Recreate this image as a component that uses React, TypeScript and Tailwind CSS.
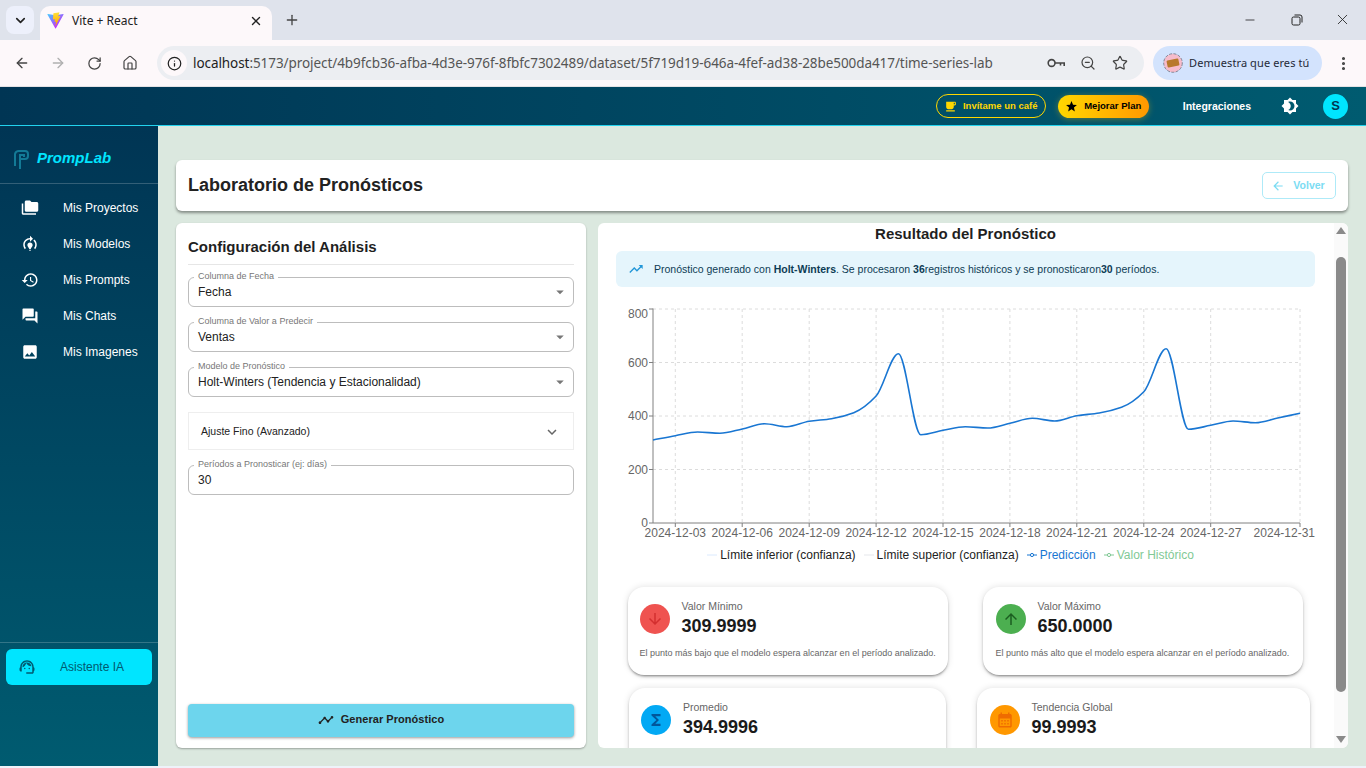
import React from 'react';
import { ArrowLeft, ArrowRight, ChevronDown, Home, Info, Minus, MoreVertical, Plus, RotateCw, Star, X, ZoomOut } from 'lucide-react';

// material style icons, filled
const Mi = ({ d, className }: { d: string; className?: string }) => (
  <svg viewBox="0 0 24 24" fill="currentColor" className={className}>
    <path d={d} />
  </svg>
);

const ICONS = {
  folder: 'M3 19h17v2H3c-1.1 0-2-.9-2-2V6h2v13zM23 6v9c0 1.1-.9 2-2 2H7c-1.1 0-2-.9-2-2l.01-11c0-1.1.89-2 1.99-2h5l2 2h7c1.1 0 2 .9 2 2z',
  model: 'M15.5 13.5c0 2-2.5 3.5-2.5 5h-2c0-1.5-2.5-3-2.5-5 0-1.93 1.57-3.5 3.5-3.5s3.5 1.57 3.5 3.5zm-2.5 6h-2V21h2v-1.5zM19 13c0 1.68-.59 3.21-1.58 4.42l1.42 1.42C20.18 17.27 21 15.23 21 13c0-2.74-1.23-5.19-3.16-6.84l-1.42 1.42C17.99 8.86 19 10.81 19 13zM16 5l-4-4v3c-4.97 0-9 4.03-9 9 0 2.23.82 4.27 2.16 5.84l1.42-1.42C5.59 16.21 5 14.68 5 13c0-3.86 3.14-7 7-7v3l4-4z',
  history: 'M13 3c-4.97 0-9 4.03-9 9H1l3.89 3.89.07.14L9 12H6c0-3.87 3.13-7 7-7s7 3.13 7 7-3.13 7-7 7c-1.93 0-3.68-.79-4.94-2.06l-1.42 1.42C8.27 19.99 10.51 21 13 21c4.97 0 9-4.03 9-9s-4.03-9-9-9zm-1 5v5l4.28 2.54.72-1.21-3.5-2.08V8H12z',
  forum: 'M21 6h-2v9H6v2c0 .55.45 1 1 1h11l4 4V7c0-.55-.45-1-1-1zm-4 6V3c0-.55-.45-1-1-1H3c-.55 0-1 .45-1 1v14l4-4h10c.55 0 1-.45 1-1z',
  image: 'M21 19V5c0-1.1-.9-2-2-2H5c-1.1 0-2 .9-2 2v14c0 1.1.9 2 2 2h14c1.1 0 2-.9 2-2zM8.5 13.5l2.5 3.01L14.5 12l4.5 6H5l3.5-4.5z',
  cafe: 'M20 3H4v10c0 2.21 1.79 4 4 4h6c2.21 0 4-1.79 4-4v-3h2c1.11 0 2-.9 2-2V5c0-1.11-.89-2-2-2zm0 5h-2V5h2v3zM4 19h16v2H4z',
  star: 'M12 17.27 18.18 21l-1.64-7.03L22 9.24l-7.19-.61L12 2 9.19 8.63 2 9.24l5.46 4.73L5.82 21z',
  theme: 'M20 8.69V4h-4.69L12 .69 8.69 4H4v4.69L.69 12 4 15.31V20h4.69L12 23.31 15.31 20H20v-4.69L23.31 12 20 8.69zM12 18c-.89 0-1.74-.2-2.5-.55C11.56 16.5 13 14.42 13 12s-1.44-4.5-3.5-5.45C10.26 6.2 11.11 6 12 6c3.31 0 6 2.69 6 6s-2.69 6-6 6z',
  back: 'M20 11H7.83l5.59-5.59L12 4l-8 8 8 8 1.41-1.41L7.83 13H20v-2z',
  expand: 'M16.59 8.59 12 13.17 7.41 8.59 6 10l6 6 6-6z',
  drop: 'M7 10l5 5 5-5z',
  trend: 'M16 6l2.29 2.29-4.88 4.88-4-4L2 16.59 3.41 18l6-6 4 4 6.3-6.29L22 12V6z',
  timeline: 'M23 8c0 1.1-.9 2-2 2-.18 0-.35-.02-.51-.07l-3.56 3.55c.05.16.07.34.07.52 0 1.1-.9 2-2 2s-2-.9-2-2c0-.18.02-.36.07-.52l-2.55-2.55c-.16.05-.34.07-.52.07s-.36-.02-.52-.07l-4.55 4.56c.05.16.07.33.07.51 0 1.1-.9 2-2 2s-2-.9-2-2 .9-2 2-2c.18 0 .35.02.51.07l4.56-4.55C8.02 9.36 8 9.18 8 9c0-1.1.9-2 2-2s2 .9 2 2c0 .18-.02.36-.07.52l2.55 2.55c.16-.05.34-.07.52-.07s.36.02.52.07l3.55-3.56C19.02 8.35 19 8.18 19 8c0-1.1.9-2 2-2s2 .9 2 2z',
  agent: 'M21 12.22C21 6.73 16.74 3 12 3c-4.69 0-9 3.65-9 9.28-.6.34-1 .98-1 1.72v2c0 1.1.9 2 2 2h1v-6.1c0-3.87 3.13-7 7-7s7 3.13 7 7V19h-8v2h8c1.1 0 2-.9 2-2v-1.22c.59-.31 1-.92 1-1.62v-2.3c0-.7-.41-1.31-1-1.64zM9 13a1 1 0 1 0 0 2 1 1 0 0 0 0-2zm6 0a1 1 0 1 0 0 2 1 1 0 0 0 0-2zM18 11.03C17.52 8.18 15.04 6 12.05 6c-3.03 0-6.29 2.51-6.03 6.45 2.47-1.01 4.33-3.21 4.86-5.89 1.31 2.63 4 4.44 7.12 4.47z',
  down: 'M20 12l-1.41-1.41L13 16.17V4h-2v12.17l-5.58-5.59L4 12l8 8 8-8z',
  up: 'M4 12l1.41 1.41L11 7.83V20h2V7.83l5.58 5.59L20 12l-8-8-8 8z',
  sigma: 'M18 4H6v2l6.5 6L6 18v2h12v-3h-7l5-5-5-5h7z',
  calendar: 'M19 4h-1V2h-2v2H8V2H6v2H5c-1.11 0-1.99.9-1.99 2L3 20c0 1.1.89 2 2 2h14c1.1 0 2-.9 2-2V6c0-1.1-.9-2-2-2zm0 16H5V10h14v10zM9 14H7v-2h2v2zm4 0h-2v-2h2v2zm4 0h-2v-2h2v2zm-8 4H7v-2h2v2zm4 0h-2v-2h2v2zm4 0h-2v-2h2v2z',
};

const ViteLogo = () => (
  <svg viewBox="0 0 410 404" className="h-[17px] w-[17px] shrink-0">
    <defs>
      <linearGradient id="vite-a" x1="6" y1="33" x2="235" y2="344" gradientUnits="userSpaceOnUse">
        <stop stopColor="#41D1FF" />
        <stop offset="1" stopColor="#BD34FE" />
      </linearGradient>
      <linearGradient id="vite-b" x1="194" y1="8" x2="236" y2="293" gradientUnits="userSpaceOnUse">
        <stop stopColor="#FFEA83" />
        <stop offset="0.08" stopColor="#FFDD35" />
        <stop offset="1" stopColor="#FFA800" />
      </linearGradient>
    </defs>
    <path fill="url(#vite-a)" d="M399.641 59.5246L215.643 388.545C211.844 395.338 202.084 395.378 198.228 388.618L10.5817 59.5563C6.38087 52.1896 12.6802 43.2665 21.0281 44.7586L205.223 77.6824C206.398 77.8924 207.601 77.8904 208.776 77.6763L389.119 44.8058C397.439 43.2894 403.768 52.1434 399.641 59.5246Z" />
    <path fill="url(#vite-b)" d="M292.965 1.5744L156.801 28.2552C154.563 28.6937 152.906 30.5903 152.771 32.8664L144.395 174.33C144.198 177.662 147.258 180.248 150.51 179.498L188.42 170.749C191.967 169.931 195.172 173.055 194.443 176.622L183.18 231.775C182.422 235.487 185.907 238.661 189.532 237.56L212.947 230.446C216.577 229.344 220.065 232.527 219.297 236.242L201.398 322.875C200.278 328.294 207.486 331.249 210.492 326.603L212.5 323.5L323.454 102.072C325.312 98.3645 322.108 94.137 318.036 94.9228L279.014 102.454C275.347 103.161 272.227 99.746 273.262 96.1583L298.731 7.86689C299.767 4.27314 296.636 0.855181 292.965 1.5744Z" />
  </svg>
);

const BrowserChrome = () => (
  <div className="h-[87px] shrink-0 font-['Noto_Sans',sans-serif] text-[#3c4043]">
    {/* tab strip */}
    <div className="flex h-[40px] items-end bg-[#dfe3ec] pl-[6px]">
      <div className="mb-[6px] flex h-[28px] w-[28px] items-center justify-center rounded-lg bg-[#edf0fb]">
        <ChevronDown size={15} strokeWidth={2.6} className="text-[#222]" />
      </div>
      <div className="ml-[6px] flex h-[34px] w-[232px] items-center rounded-t-[10px] bg-[#fdf8fa] pb-[5px] pl-[7px] pr-[9px]">
        <ViteLogo />
        <span className="ml-[8px] flex-1 text-[12px] text-[#222]">Vite + React</span>
        <X size={14} strokeWidth={2.4} className="text-[#222]" />
      </div>
      <div className="mb-[12px] ml-[12px] flex h-[16px] w-[16px] items-center justify-center">
        <Plus size={16} strokeWidth={2} className="text-[#444]" />
      </div>
      <div className="mb-[12px] ml-auto flex items-center text-[#222]">
        <Minus size={14} strokeWidth={1.4} className="mr-[34px]" />
        <svg viewBox="0 0 12 12" className="mr-[31px] h-[12px] w-[12px]" fill="none" stroke="currentColor" strokeWidth="1">
          <rect x="1" y="3" width="8" height="8" rx="1.5" />
          <path d="M3.5 1h5.5a2 2 0 0 1 2 2v5.5" />
        </svg>
        <X size={17} strokeWidth={1.2} className="mr-[15px]" />
      </div>
    </div>
    {/* toolbar */}
    <div className="flex h-[46px] items-center bg-[#fdf8fa] pl-[14px]">
      <ArrowLeft size={16} strokeWidth={2} className="text-[#444]" />
      <ArrowRight size={16} strokeWidth={2} className="ml-[20px] text-[#b0b0b0]" />
      <RotateCw size={15} strokeWidth={2} className="ml-[21px] text-[#444]" />
      <Home size={16} strokeWidth={1.8} className="ml-[20px] text-[#444]" />
      <div className="ml-[19px] flex h-[34px] w-[987px] items-center rounded-full bg-[#eceef2] pl-[4px] pr-[16px]">
        <div className="flex h-[26px] w-[26px] items-center justify-center rounded-full bg-[#fdf8fa]">
          <Info size={15} strokeWidth={2} className="text-[#222]" />
        </div>
        <span className="ml-[6px] flex-1 truncate text-[13.5px] tracking-[-0.07px] text-[#555]">
          <span className="text-[#222]">localhost</span>:5173/project/4b9fcb36-afba-4d3e-976f-8fbfc7302489/dataset/5f719d19-646a-4fef-ad38-28be500da417/time-series-lab
        </span>
        <svg viewBox="0 0 18 10" className="h-[10px] w-[18px] text-[#444]" fill="none" stroke="currentColor" strokeWidth="1.6">
          <circle cx="4.6" cy="5" r="3.4" />
          <path d="M8 5h9.2v3M13.5 5v2.4" />
        </svg>
        <ZoomOut size={16} strokeWidth={1.8} className="ml-[15px] text-[#444]" />
        <Star size={16} strokeWidth={1.8} className="ml-[16px] text-[#444]" />
      </div>
      <div className="ml-[9px] flex h-[34px] w-[169px] items-center rounded-full bg-[#d3e3fd] pl-[10px]">
        <svg viewBox="0 0 20 20" className="h-[20px] w-[20px] shrink-0">
          <circle cx="10" cy="10" r="9.3" fill="#f6bccb" stroke="#6b7280" strokeWidth="0.8" strokeDasharray="3 1.4" />
          <rect x="4" y="6.5" width="12" height="7" rx="1" fill="#b8792a" transform="rotate(-12 10 10)" />
        </svg>
        <span className="ml-[6px] text-[11px] tracking-[0.1px] text-[#1f2937]">Demuestra que eres tú</span>
      </div>
      <MoreVertical size={17} strokeWidth={2.4} className="ml-[13px] text-[#444]" />
    </div>
    <div className="h-[1px] bg-[#e4e2e4]" />
  </div>
);

const TopBar = () => (
  <header className="flex h-[39px] shrink-0 items-center border-b border-b-[#22d3ee] bg-gradient-to-r from-[#003554] to-[#005b70] pr-[18px]">
    <div className="ml-auto flex h-[24px] w-[110px] items-center justify-center rounded-full border border-[#ffd700] text-[9.5px] font-bold text-[#ffd700]">
      <Mi d={ICONS.cafe} className="mr-[6px] h-[13px] w-[13px]" />
      Invítame un café
    </div>
    <div className="ml-[12px] flex h-[23px] w-[91px] items-center justify-center rounded-full bg-gradient-to-r from-[#ffd700] to-[#ff9800] text-[9.5px] font-bold text-black shadow-[0_1px_6px_rgba(255,200,0,0.35)]">
      <Mi d={ICONS.star} className="mr-[6px] h-[13px] w-[13px]" />
      Mejorar Plan
    </div>
    <span className="ml-[34px] pt-[1px] text-[10.5px] font-bold text-white">Integraciones</span>
    <Mi d={ICONS.theme} className="ml-[30px] h-[18px] w-[18px] text-white" />
    <div className="ml-[24px] flex h-[25px] w-[25px] items-center justify-center rounded-full bg-[#00e5ff] text-[13px] font-bold text-[#003554]">S</div>
  </header>
);

const NAV = [
  { label: 'Mis Proyectos', icon: ICONS.folder },
  { label: 'Mis Modelos', icon: ICONS.model },
  { label: 'Mis Prompts', icon: ICONS.history },
  { label: 'Mis Chats', icon: ICONS.forum },
  { label: 'Mis Imagenes', icon: ICONS.image },
];

const Sidebar = () => (
  <aside className="flex w-[158px] shrink-0 flex-col bg-gradient-to-b from-[#003554] to-[#005b70]">
    <div className="flex h-[58px] items-center border-b border-b-white/20 pl-[12px] pt-[8px]">
      <svg viewBox="0 0 18 22" className="h-[22px] w-[18px]" fill="none" stroke="#137a96" strokeWidth="2">
        <path d="M3 18V6a4 4 0 0 1 4-3h6a3 3 0 0 1 3 3v2a3 3 0 0 1-3 3H9" />
        <path d="M8 21V7h4v2" />
      </svg>
      <span className="ml-[7px] text-[15px] font-bold italic text-[#00e5ff]">PrompLab</span>
    </div>
    <nav className="flex flex-col pt-[6px]">
      {NAV.map((item) => (
        <div key={item.label} className="flex h-[36px] items-center pl-[21px] text-white">
          <Mi d={item.icon} className="h-[18px] w-[18px] shrink-0" />
          <span className="ml-[24px] text-[12px]">{item.label}</span>
        </div>
      ))}
    </nav>
    <div className="mt-auto mb-[81px] border-t border-t-white/20 px-[6px] pt-[6px]">
      <div className="flex h-[36px] items-center rounded-[6px] bg-[#00e5ff] pl-[12px] text-[#005a70]">
        <Mi d={ICONS.agent} className="h-[18px] w-[18px] shrink-0" />
        <span className="ml-[24px] text-[12px]">Asistente IA</span>
      </div>
    </div>
  </aside>
);

const Field = ({ label, value, select = true }: { label: string; value: string; select?: boolean }) => (
  <div className="relative flex h-[30px] items-center rounded-[6px] border border-[#bdbdbd] pl-[9px] pr-[4px]">
    <span className="absolute left-[5px] top-[-8px] bg-white px-[4px] text-[9px] leading-[12px] text-[#777]">{label}</span>
    <span className="flex-1 text-[12px] text-[#222]">{value}</span>
    {select && <Mi d={ICONS.drop} className="h-[18px] w-[18px] text-[#777]" />}
  </div>
);

// pixel positions of the forecast line, read from the chart
const LINE_Y = [440, 435.7, 432, 433.3, 429, 423.7, 426.7, 421.3, 418.7, 412.7, 396, 353.7, 434.7, 430.3, 426.7, 428, 423.3, 418.3, 421, 415.7, 413, 407.3, 391.7, 348.7, 429.3, 425.3, 421, 422.7, 418, 413.3];
const X0 = 653;
const STEP = 647 / 29;

// monotone curve, flat at each turning point so nothing overshoots the data
const smoothPath = (ys: number[]) => {
  const slopes = ys.slice(1).map((y, i) => (y - ys[i]) / STEP);
  const tangents = ys.map((_, i) => {
    if (i === 0) return slopes[0];
    if (i === ys.length - 1) return slopes[i - 1];
    const a = slopes[i - 1];
    const b = slopes[i];
    if (a * b <= 0) return 0;
    return (2 * a * b) / (a + b);
  });
  let d = `M${X0} ${ys[0]}`;
  for (let i = 0; i < ys.length - 1; i++) {
    const x1 = X0 + i * STEP;
    const x2 = x1 + STEP;
    d += ` C${x1 + STEP / 3} ${ys[i] + (tangents[i] * STEP) / 3} ${x2 - STEP / 3} ${ys[i + 1] - (tangents[i + 1] * STEP) / 3} ${x2} ${ys[i + 1]}`;
  }
  return d;
};

const X_TICKS = [
  { x: 675.3, label: '2024-12-03' },
  { x: 742.2, label: '2024-12-06' },
  { x: 809.2, label: '2024-12-09' },
  { x: 876.1, label: '2024-12-12' },
  { x: 943, label: '2024-12-15' },
  { x: 1009.9, label: '2024-12-18' },
  { x: 1076.8, label: '2024-12-21' },
  { x: 1143.8, label: '2024-12-24' },
  { x: 1210.7, label: '2024-12-27' },
];
const Y_TICKS = [
  { y: 309, label: '800', ty: 314.5 },
  { y: 362.5, label: '600', ty: 364 },
  { y: 416, label: '400', ty: 417 },
  { y: 469.5, label: '200', ty: 470.5 },
  { y: 523, label: '0', ty: 524 },
];

// viewBox uses page coordinates so the numbers can be checked against the reference
const Chart = () => (
  <svg viewBox="616 287 700 258" className="block h-[258px] w-[700px] overflow-visible">
    <g stroke="#dcdcdc" strokeDasharray="3 3" strokeWidth="1">
      {Y_TICKS.slice(0, 4).map((t) => (
        <line key={t.label} x1={X0} x2={1300} y1={t.y} y2={t.y} />
      ))}
      {[...X_TICKS.map((t) => t.x), 1300].map((x) => (
        <line key={x} x1={x} x2={x} y1={309} y2={523} />
      ))}
    </g>
    <g stroke="#808080" strokeWidth="1">
      <line x1={X0} x2={X0} y1={308.5} y2={523} />
      <line x1={X0} x2={1300} y1={523} y2={523} />
      {Y_TICKS.map((t) => (
        <line key={t.label} x1={649} x2={X0} y1={t.y} y2={t.y} />
      ))}
      {[...X_TICKS.map((t) => t.x), 1300].map((x) => (
        <line key={x} x1={x} x2={x} y1={523} y2={527} />
      ))}
    </g>
    <path d={smoothPath(LINE_Y)} fill="none" stroke="#1976d2" strokeWidth="1.6" />
    <g fill="#666" fontSize="12">
      {Y_TICKS.map((t) => (
        <text key={t.label} x={648} y={t.ty} textAnchor="end" dominantBaseline="middle">{t.label}</text>
      ))}
      {X_TICKS.map((t) => (
        <text key={t.label} x={t.x} y={534} textAnchor="middle" dominantBaseline="middle">{t.label}</text>
      ))}
      <text x={1315} y={534} textAnchor="end" dominantBaseline="middle">2024-12-31</text>
    </g>
  </svg>
);

const LegendItem = ({ label, color, text, dot }: { label: string; color: string; text: string; dot?: boolean }) => (
  <span className={`flex items-center text-[12px] ${text}`}>
    <svg viewBox="0 0 10 6" className="mr-[3px] h-[6px] w-[10px]" fill="#fff" stroke={color} strokeWidth="1">
      <line x1="0" x2="10" y1="3" y2="3" />
      {dot && <circle cx="5" cy="3" r="1.6" />}
    </svg>
    {label}
  </span>
);

const StatCard = ({ label, value, desc, icon, circle, iconColor, w }: { label: string; value: string; desc?: string; icon: string; circle: string; iconColor: string; w: string }) => (
  <div className={`rounded-2xl bg-white p-3 shadow-[0_2px_3px_-1px_rgba(0,0,0,0.5),0_0_7px_rgba(0,0,0,0.12)] ${w}`}>
    <div className="flex items-center gap-3">
      <div className={`flex h-[30px] w-[30px] shrink-0 items-center justify-center rounded-full ${circle}`}>
        <Mi d={icon} className={`h-[18px] w-[18px] ${iconColor}`} />
      </div>
      <div>
        <div className="text-[10.5px] leading-[14px] text-[#666]">{label}</div>
        <div className="mt-[1px] text-[18px] font-bold leading-[24px] text-[#1a1a1a]">{value}</div>
      </div>
    </div>
    {desc ? <p className="mb-[3px] mt-[9px] whitespace-nowrap text-[9px] leading-[13px] text-[#666]">{desc}</p> : <div className="h-[25px]" />}
  </div>
);

const App = () => (
  <div className="flex h-screen w-full flex-col overflow-hidden bg-[#eef2f9] font-['Liberation_Sans',Arial,sans-serif]">
    <BrowserChrome />
    <TopBar />
    <div className="flex h-[640px] shrink-0">
      <Sidebar />
      <main className="flex min-w-0 flex-1 flex-col bg-[#dbe8df] px-[18px] pb-[18px] pt-[34px]">
        <div className="flex h-[51px] shrink-0 items-center justify-between rounded-[6px] bg-white pl-[12px] pr-[12px] shadow-[0_2px_3px_rgba(0,0,0,0.4)]">
          <h1 className="text-[18px] font-bold text-[#222]">Laboratorio de Pronósticos</h1>
          <div className="flex h-[27px] w-[74px] items-center justify-center rounded-[5px] border border-[#aeeaf8] pr-[2px] text-[10.5px] font-bold text-[#7bdcf3]">
            <Mi d={ICONS.back} className="mr-[8px] h-[14px] w-[14px]" />
            Volver
          </div>
        </div>
        <div className="mt-[12px] flex min-h-0 flex-1 gap-[12px]">
          {/* left: settings */}
          <section className="flex w-[410px] shrink-0 flex-col rounded-[6px] bg-white px-[12px] pb-[11px] pt-[12px] shadow-[0_1px_2px_rgba(0,0,0,0.3)]">
            <h2 className="border-b border-b-[#e6e6e6] pb-[5px] text-[15px] font-bold leading-[24px] text-[#1f1f1f]">Configuración del Análisis</h2>
            <div className="mt-[12px] flex flex-col gap-[15px]">
              <Field label="Columna de Fecha" value="Fecha" />
              <Field label="Columna de Valor a Predecir" value="Ventas" />
              <Field label="Modelo de Pronóstico" value="Holt-Winters (Tendencia y Estacionalidad)" />
              <div className="flex h-[38px] items-center border border-[#eeeeee] pl-[12px] pr-[12px] pt-[1px]">
                <span className="flex-1 text-[10.5px] text-[#222]">Ajuste Fino (Avanzado)</span>
                <Mi d={ICONS.expand} className="h-[18px] w-[18px] text-[#666]" />
              </div>
              <Field label="Períodos a Pronosticar (ej: días)" value="30" select={false} />
            </div>
            <button className="mt-auto flex h-[33px] shrink-0 items-center justify-center rounded-[4px] bg-[#6dd5ed] pb-[2px] text-[11px] font-bold tracking-[0.05px] text-[#222] shadow-[0_1px_3px_rgba(0,0,0,0.4)]">
              <Mi d={ICONS.timeline} className="mr-[7px] h-[16px] w-[16px]" />
              Generar Pronóstico
            </button>
          </section>
          {/* right: result */}
          <section className="flex min-w-0 flex-1 overflow-hidden rounded-[6px] bg-white">
            <div className="min-w-0 flex-1 overflow-hidden pl-[18px] pr-[19px]">
              <h2 className="h-[20px] text-center text-[15px] font-bold leading-[22px] text-[#1f1f1f]">Resultado del Pronóstico</h2>
              <div className="mt-[8px] flex h-[36px] items-center rounded-[6px] bg-[#e5f5fc] pl-[12px] text-[10.5px] text-[#0d3c55]">
                <Mi d={ICONS.trend} className="h-[16px] w-[16px] text-[#2196d8]" />
                <span className="ml-[10px] pt-[1px]">
                  Pronóstico generado con <b>Holt-Winters</b>. Se procesaron <b>36</b>registros históricos y se pronosticaron<b>30</b> períodos.
                </span>
              </div>
              <Chart />
              <div className="flex h-[20px] items-center justify-center gap-[8px] pr-[30px]">
                <LegendItem label="Límite inferior (confianza)" color="#dbeafe" text="text-[#222]" />
                <LegendItem label="Límite superior (confianza)" color="#e5e7eb" text="text-[#222]" />
                <LegendItem label="Predicción" color="#1976d2" text="text-[#1976d2]" dot />
                <LegendItem label="Valor Histórico" color="#81c995" text="text-[#81c995]" dot />
              </div>
              <div className="-mx-[6px] mt-[22px] grid w-[710px] grid-cols-2 justify-items-center gap-y-[13px]">
                <StatCard w="w-[320px]" label="Valor Mínimo" value="309.9999" desc="El punto más bajo que el modelo espera alcanzar en el período analizado." icon={ICONS.down} circle="bg-[#ef5350]" iconColor="text-[#d32f2f]" />
                <StatCard w="w-[320px] pl-[13px]" label="Valor Máximo" value="650.0000" desc="El punto más alto que el modelo espera alcanzar en el período analizado." icon={ICONS.up} circle="bg-[#4caf50]" iconColor="text-[#1b5e20]" />
                <StatCard w="w-[317px]" label="Promedio" value="394.9996" icon={ICONS.sigma} circle="bg-[#03a9f4]" iconColor="text-[#01579b]" />
                <StatCard w="ml-[1px] w-[333px] pl-[13px]" label="Tendencia Global" value="99.9993" icon={ICONS.calendar} circle="bg-[#ff9800]" iconColor="text-[#ef6c00]" />
              </div>
            </div>
            {/* scrollbar */}
            <div className="flex w-[14px] shrink-0 flex-col items-center bg-[#fafafa] pt-[4px]">
              <div className="h-0 w-0 border-x-[5px] border-b-[7px] border-x-transparent border-b-[#8a8a8a]" />
              <div className="mt-[23px] h-[435px] w-[10px] rounded-full bg-[#8a8a8a]" />
              <div className="mt-[44px] h-0 w-0 border-x-[5px] border-t-[7px] border-x-transparent border-t-[#8a8a8a]" />
            </div>
          </section>
        </div>
      </main>
    </div>
  </div>
);

export default App;
